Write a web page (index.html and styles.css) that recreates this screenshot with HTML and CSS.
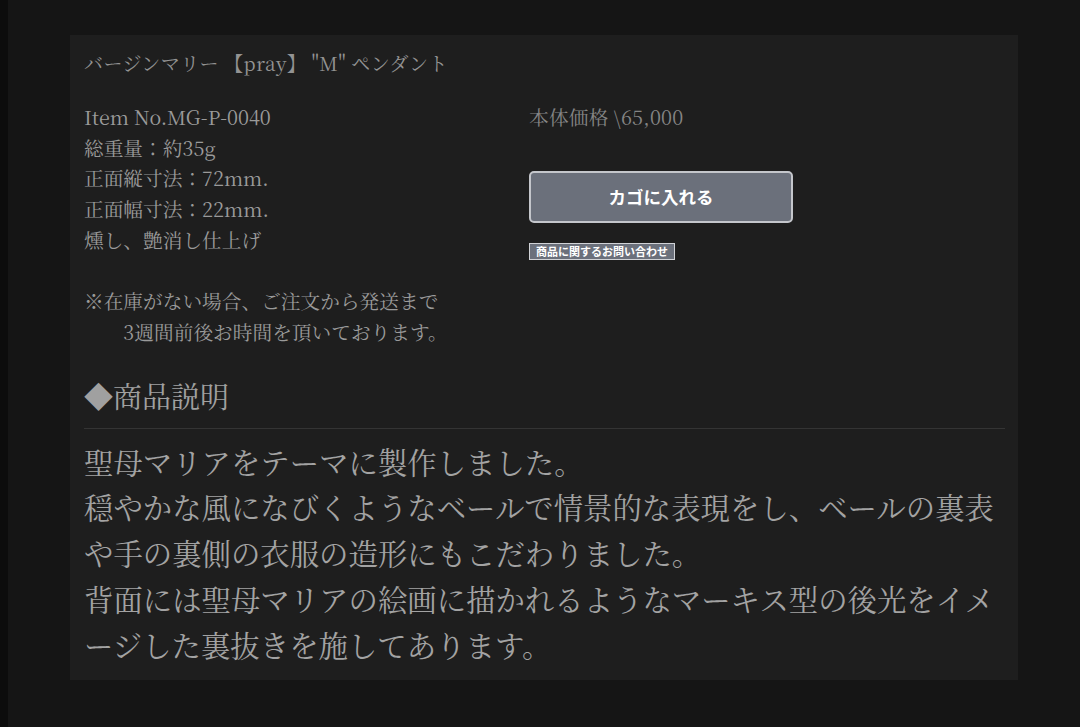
FILE: index.html
```html
<!DOCTYPE html>
<html lang="ja">
<head>
<meta charset="utf-8">
<title>バージンマリー 【pray】 "M" ペンダント</title>
<link rel="stylesheet" href="styles.css">
</head>
<body>
<div class="page">
  <section class="panel">
    <h1 class="title">バージンマリー 【pray】 "M" ペンダント</h1>
    <div class="info">
      <div class="specs">
        <p class="spec-lines">Item No.MG-P-0040<br>総重量：約35g<br>正面縦寸法：72mm.<br>正面幅寸法：22mm.<br>燻し、艶消し仕上げ</p>
        <p class="spec-lines note">※在庫がない場合、ご注文から発送まで<br>　　3週間前後お時間を頂いております。</p>
      </div>
      <div class="buy">
        <p class="price">本体価格 \65,000</p>
        <button class="cart-btn" type="button">カゴに入れる</button>
        <button class="ask-btn" type="button">商品に関するお問い合わせ</button>
      </div>
    </div>
    <h2 class="desc-head">◆商品説明</h2>
    <div class="desc">
      <p>聖母マリアをテーマに製作しました。</p>
      <p>穏やかな風になびくようなベールで情景的な表現をし、ベールの裏表や手の裏側の衣服の造形にもこだわりました。</p>
      <p>背面には聖母マリアの絵画に描かれるようなマーキス型の後光をイメージした裏抜きを施してあります。</p>
    </div>
  </section>
</div>
</body>
</html>
```
FILE: styles.css
```css
html, body {
  margin: 0;
  padding: 0;
  background: #0c0c0c;
}
body {
  height: 727px;
  overflow: hidden;
}
.page {
  margin-left: 8px;
  min-height: 727px;
  background: #151515;
  padding: 35px 0 0 62px;
  box-sizing: border-box;
}
.panel {
  width: 948px;
  box-sizing: border-box;
  background: #1e1e1e;
  padding: 13px 13px 12px 14px;
  font-family: "Noto Serif CJK JP", "Liberation Serif", "Noto Sans CJK JP", serif;
  color: #999;
}
.title {
  margin: 0;
  font-size: 19px;
  font-weight: normal;
  line-height: 30px;
  letter-spacing: 0.4px;
  color: #939393;
}
.info {
  display: grid;
  grid-template-columns: 445px 1fr;
  margin-top: 24px;
}
.spec-lines {
  margin: 0;
  font-size: 19.7px;
  line-height: 30.7px;
  color: #9a9a9a;
}
.spec-lines.note {
  margin-top: 30.7px;
}
.buy {
  display: flex;
  flex-direction: column;
  align-items: flex-start;
}
.price {
  margin: 0;
  font-size: 19.7px;
  line-height: 30.7px;
  letter-spacing: 0.2px;
  color: #858585;
}
.cart-btn {
  margin-top: 38px;
  width: 264px;
  height: 52px;
  background: #6b707b;
  border: 2px solid #c4c6cb;
  border-radius: 5px;
  color: #fff;
  font-family: "Noto Sans CJK JP", sans-serif;
  font-weight: bold;
  font-size: 17.5px;
  padding: 0;
}
.ask-btn {
  margin-top: 20px;
  height: 17px;
  padding: 0 6px;
  background: #6b707b;
  border: 1px solid #d0d2d6;
  border-radius: 0;
  color: #fff;
  font-family: "Noto Sans CJK JP", sans-serif;
  font-weight: bold;
  font-size: 11px;
  line-height: 14px;
}
.desc-head {
  margin: 28px 0 0;
  font-size: 29px;
  font-weight: normal;
  line-height: 40px;
  color: #a0a0a0;
  padding-bottom: 12px;
  border-bottom: 1px solid #343434;
}
.desc {
  margin-top: 10px;
  font-size: 29.4px;
  line-height: 45.8px;
  color: #a3a3a3;
  line-break: loose;
}
.desc p {
  margin: 0;
}
```
